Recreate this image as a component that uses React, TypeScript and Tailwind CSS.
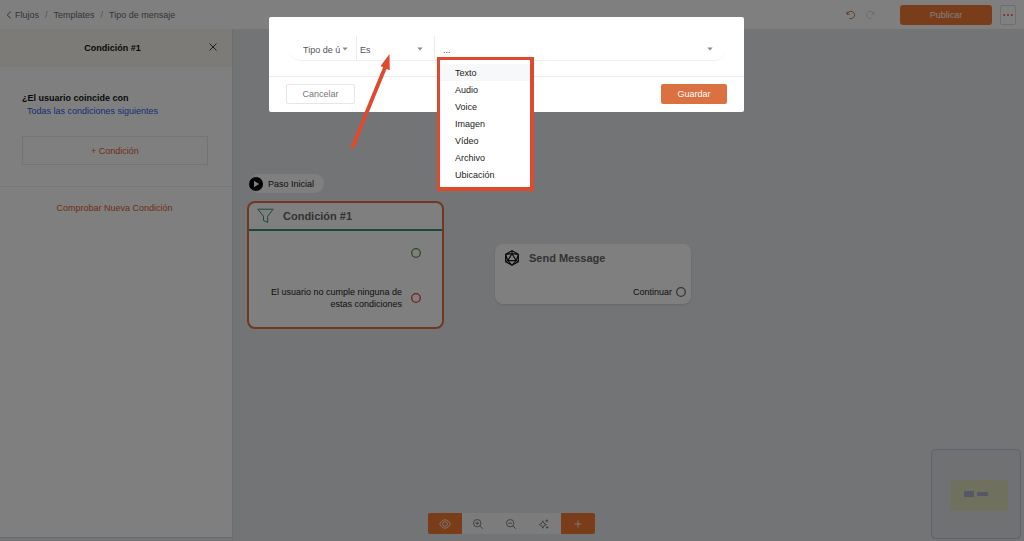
import React, { useState } from "react";

const messageTypes = ["Texto", "Audio", "Voice", "Imagen", "Vídeo", "Archivo", "Ubicación"];

function Caret({ className = "" }: { className?: string }) {
  return (
    <svg viewBox="0 0 6 4" className={`pointer-events-none h-1 w-[6px] ${className}`} aria-hidden="true">
      <path d="M0.4 0.4h5.2L3 3.6z" fill="#8a8a8a" />
    </svg>
  );
}

function Port({ className }: { className: string }) {
  return (
    <svg viewBox="0 0 10 10" className={`size-[10px] shrink-0 ${className}`} fill="none" stroke="currentColor" aria-hidden="true">
      <circle cx="5" cy="5" r="4.3" strokeWidth="1.3" />
    </svg>
  );
}

function Header() {
  return (
    <header className="flex h-[29px] items-center justify-between bg-white pr-2 pl-[6px]">
      <nav aria-label="Ruta" className="flex items-center gap-[6px] text-[#6b6b6b]">
        <a href="#flujos" className="flex items-center gap-[3px]">
          <svg viewBox="0 0 6 8" className="h-2 w-[6px]" fill="none" stroke="currentColor" aria-hidden="true">
            <path d="M4.8 0.6 1.2 4l3.6 3.4" />
          </svg>
          Flujos
        </a>
        <span className="text-[#a5a5a5]">/</span>
        <a href="#templates">Templates</a>
        <span className="text-[#a5a5a5]">/</span>
        <span>Tipo de mensaje</span>
      </nav>
      <div className="flex items-center">
        <button aria-label="Deshacer" className="text-[#c0623a]">
          <svg viewBox="0 0 10 10" className="size-[10px]" fill="none" stroke="currentColor" strokeWidth="0.9" aria-hidden="true">
            <path d="M1 1.6v2.6h2.6M1.3 4A3.7 3.7 0 1 1 3.4 8.4" />
          </svg>
        </button>
        <button aria-label="Rehacer" className="ml-[9px] text-[#d2d2d2]">
          <svg viewBox="0 0 10 10" className="size-[10px]" fill="none" stroke="currentColor" strokeWidth="0.9" aria-hidden="true">
            <path d="M9 1.6v2.6H6.4M8.7 4A3.7 3.7 0 1 0 6.6 8.4" />
          </svg>
        </button>
        <button className="ml-[25px] h-5 w-[92px] rounded-[3px] bg-[#f47a35] text-white">Publicar</button>
        <button
          aria-label="Más opciones"
          className="ml-2 flex h-5 w-4 items-center justify-center rounded-[2px] border border-[#dedede]"
        >
          <svg viewBox="0 0 10 2" className="h-[2px] w-[10px] shrink-0" fill="#dc6238" aria-hidden="true">
            <circle cx="1.2" cy="1" r="1" />
            <circle cx="5" cy="1" r="1" />
            <circle cx="8.8" cy="1" r="1" />
          </svg>
        </button>
      </div>
    </header>
  );
}

function Sidebar() {
  return (
    <aside className="mb-[3px] w-[232px] shrink-0 border-b border-[#d0d8dc] bg-white">
      <div className="relative flex h-[38px] items-center justify-center bg-[#faf6ee] pr-[7px]">
        <h2 className="font-bold text-[#111]">Condición #1</h2>
        <button aria-label="Cerrar" className="absolute top-[14px] right-[15px]">
          <svg viewBox="0 0 8 8" className="size-2" stroke="#222" strokeWidth="0.9" aria-hidden="true">
            <path d="M0.5 0.5l7 7M7.5 0.5l-7 7" />
          </svg>
        </button>
      </div>
      <div className="border-b border-[#eceff0] px-[22px] pt-6 pb-[21px]">
        <p className="leading-[14px] font-bold text-[#111]">¿El usuario coincide con</p>
        <a href="#condiciones" className="ml-[5px] block leading-[13px] text-[#2f5ae6]">
          Todas las condiciones siguientes
        </a>
        <button className="mt-[18px] h-[29px] w-[186px] border border-[#e4eaec] text-[#dc602a]">+ Condición</button>
      </div>
      <div className="flex justify-center pt-[14px] pr-[3px]">
        <button className="text-[#dc602a]">Comprobar Nueva Condición</button>
      </div>
    </aside>
  );
}

function Canvas() {
  return (
    <main className="relative flex-1 border-l border-[#d8dfe1] bg-[#e5e9ed]">
      <div className="absolute top-[145px] left-[16px] flex h-[19px] w-[75px] items-center gap-[5px] rounded-full bg-white text-[#222]">
        <svg viewBox="0 0 14 14" className="size-[14px] shrink-0" aria-hidden="true">
          <circle cx="7" cy="7" r="7" />
          <path d="M5 3.8v6.4L10.2 7z" fill="#fff" />
        </svg>
        <span className="whitespace-nowrap">Paso Inicial</span>
      </div>

      <section className="absolute top-[172px] left-[14px] h-[128px] w-[197px] rounded-lg border-2 border-[#e07042] bg-white">
        <div className="flex h-7 items-center gap-[9px] border-b-2 border-[#3d8f72] pl-2">
          <svg viewBox="0 0 17 16" className="h-4 w-[17px]" fill="none" stroke="#3d8f72" strokeLinejoin="round" aria-hidden="true">
            <path d="M0.8 1.2h15.4l-5.5 7v6.3l-4.2-2V8.2z" />
          </svg>
          <h3 className="text-[11px] font-bold text-[#666]">Condición #1</h3>
        </div>
        <div className="flex h-[43px] items-center justify-end pr-[21px]">
          <Port className="text-[#5c9a3e]" />
        </div>
        <div className="flex h-[48px] items-center justify-end gap-[9px] pr-[21px] text-right leading-3 text-[#222]">
          <p className="w-[142px]">El usuario no cumple ninguna de estas condiciones</p>
          <Port className="text-[#dc4a32]" />
        </div>
      </section>

      <section className="absolute top-[215px] left-[262px] flex h-[60px] w-[196px] flex-col justify-between rounded-lg bg-white shadow-sm">
        <div className="flex items-center gap-[9px] pt-[6px] pl-[9px]">
          <svg viewBox="0 0 16 16" className="size-4" fill="none" stroke="#1a1a1a" strokeWidth="1.2" strokeLinejoin="round" aria-hidden="true">
            <path d="M8 0.7 14.4 4.3v7.4L8 15.3l-6.4-3.6V4.3zM8 3.6l4.2 7.1H3.8zM8 0.7v2.9M1.6 4.3 8 3.6l6.4.7-2.2 6.4 2.2 1M1.6 4.3l2.2 6.4-2.2 1M3.8 10.7 8 15.3l4.2-4.6" />
          </svg>
          <h3 className="text-[11px] font-bold text-[#666]">Send Message</h3>
        </div>
        <div className="flex items-center justify-end gap-1 pr-[5px] pb-[5px] text-[#222]">
          <span>Continuar</span>
          <Port className="text-[#6a6a6a]" />
        </div>
      </section>

      <svg
        viewBox="0 0 90 90"
        className="absolute right-[3px] bottom-[2px] size-[90px]"
        role="img"
        aria-label="Minimapa"
      >
        <rect x="0.5" y="0.5" width="89" height="89" rx="4" fill="#dfe2e5" stroke="#bfc3df" />
        <rect x="20" y="31" width="57" height="31" fill="#dfe0bd" />
        <rect x="33" y="42" width="10" height="6" fill="#abafcf" />
        <rect x="46" y="43" width="11" height="4" rx="1" fill="#abafcf" />
      </svg>
    </main>
  );
}

function Toolbar() {
  const tool = "flex h-[21px] w-[33px] items-center justify-center bg-[#f8f9fa] text-[#777]";
  const accent = "flex h-[21px] w-[34px] items-center justify-center bg-[#f47a35] text-white";
  const icon = "size-[10px]";
  return (
    <div className="absolute inset-x-0 bottom-[7px] flex justify-center pr-[2px]">
      <div className="flex overflow-hidden rounded-[2px]">
        <button aria-label="Vista" className={accent}>
          <svg viewBox="0 0 12 10" className="h-[10px] w-3" fill="none" stroke="currentColor" strokeWidth="0.8" aria-hidden="true">
            <path d="M0.7 5C2.8-0.6 9.2-0.6 11.3 5 9.2 10.6 2.8 10.6 0.7 5z" />
            <circle cx="6" cy="5" r="2.4" />
          </svg>
        </button>
        <button aria-label="Acercar" className={tool}>
          <svg viewBox="0 0 10 10" className={icon} fill="none" stroke="currentColor" strokeWidth="0.9" aria-hidden="true">
            <circle cx="4.2" cy="4.2" r="3.7" />
            <path d="M6.8 6.8 9.7 9.7M2.5 4.2h3.4M4.2 2.5v3.4" />
          </svg>
        </button>
        <button aria-label="Alejar" className={tool}>
          <svg viewBox="0 0 10 10" className={icon} fill="none" stroke="currentColor" strokeWidth="0.9" aria-hidden="true">
            <circle cx="4.2" cy="4.2" r="3.7" />
            <path d="M6.8 6.8 9.7 9.7M2.5 4.2h3.4" />
          </svg>
        </button>
        <button aria-label="Ordenar" className={tool}>
          <svg viewBox="0 0 10 10" className={icon} fill="none" stroke="currentColor" strokeWidth="0.9" aria-hidden="true">
            <path d="M3.8 1.8 5 4.3l2.4 1.2L5 6.7 3.8 9.2 2.6 6.7 0.4 5.5 2.6 4.3zM7.8 0.5v2.6M6.5 1.8h2.6M8.2 7.2v2.4M7 8.4h2.4" />
          </svg>
        </button>
        <button aria-label="Añadir" className={accent}>
          <svg viewBox="0 0 8 8" className="size-2" stroke="currentColor" strokeWidth="0.9" aria-hidden="true">
            <path d="M4 0.5v7M0.5 4h7" />
          </svg>
        </button>
      </div>
    </div>
  );
}

function ConditionDialog() {
  const [value, setValue] = useState("...");
  return (
    <div className="absolute inset-0 flex items-start justify-center bg-black/50 pt-[17px] pr-[11px]">
      <div role="dialog" aria-label="Editar condición" className="w-[475px] rounded-[2px] bg-white pt-[19px] text-[#555]">
        <div className="mr-[18px] ml-5 flex h-[25px] rounded-b-xl border-b border-[#f0f0f0]">
          <div className="relative w-[68px] border-r border-[#ececec]">
            <select aria-label="Campo" className="h-full w-full appearance-none bg-transparent pt-1 pr-4 pl-[14px] outline-none">
              <option>Tipo de último mensaje</option>
            </select>
            <Caret className="absolute top-[11px] right-2" />
          </div>
          <div className="relative w-[78px] border-r border-[#ececec]">
            <select aria-label="Operador" className="h-full w-full appearance-none bg-transparent pt-1 pr-4 pl-[3px] outline-none">
              <option>Es</option>
              <option>No es</option>
            </select>
            <Caret className="absolute top-[11px] right-[11px]" />
          </div>
          <div className="relative flex-1">
            <button
              aria-haspopup="listbox"
              aria-expanded="true"
              aria-label="Valor"
              className="flex h-full w-full items-center pt-1 pr-3 pl-2 text-[#333]"
            >
              {value}
            </button>
            <Caret className="absolute top-[11px] right-[13px]" />
            <div className="absolute top-[21px] left-[2px] w-[97px] border-[3px] border-r-4 border-b-4 border-[#dd4a30]">
              <ul role="listbox" aria-label="Tipo de mensaje" className="bg-white pt-1 pb-1 text-[#222]">
                {messageTypes.map((type, i) => (
                  <li
                    key={type}
                    role="option"
                    aria-selected={value === type}
                    onClick={() => setValue(type)}
                    className={`flex h-[17px] cursor-pointer items-center pl-[15px] ${i === 0 ? "bg-[#f7f8fa]" : ""}`}
                  >
                    {type}
                  </li>
                ))}
              </ul>
            </div>
          </div>
        </div>
        <div className="mt-[15px] flex items-center justify-between border-t border-[#ececec] px-[17px] pt-[7px] pb-2">
          <button className="h-5 w-[69px] rounded-[2px] border border-[#e6e6e6] text-[#777]">Cancelar</button>
          <button className="h-5 w-[66px] rounded-[2px] bg-[#db7040] text-white">Guardar</button>
        </div>
      </div>
      <svg
        viewBox="0 0 42 98"
        className="pointer-events-none absolute top-[53px] left-[350px] h-[98px] w-[42px]"
        aria-hidden="true"
      >
        <path d="M39.500 1 30.500 13l2.600 1.200L0.200 94.500l3.600 1.600L36.500 16l3.300 1.300z" fill="#dd4a30" />
      </svg>
    </div>
  );
}

export default function App() {
  return (
    <div className="relative flex min-h-screen flex-col overflow-hidden bg-[#e5e9ed] font-['Liberation_Sans',Arial,sans-serif] text-[9px] leading-[14px]">
      <Header />
      <div className="flex flex-1">
        <Sidebar />
        <Canvas />
      </div>
      <Toolbar />
      <ConditionDialog />
    </div>
  );
}
